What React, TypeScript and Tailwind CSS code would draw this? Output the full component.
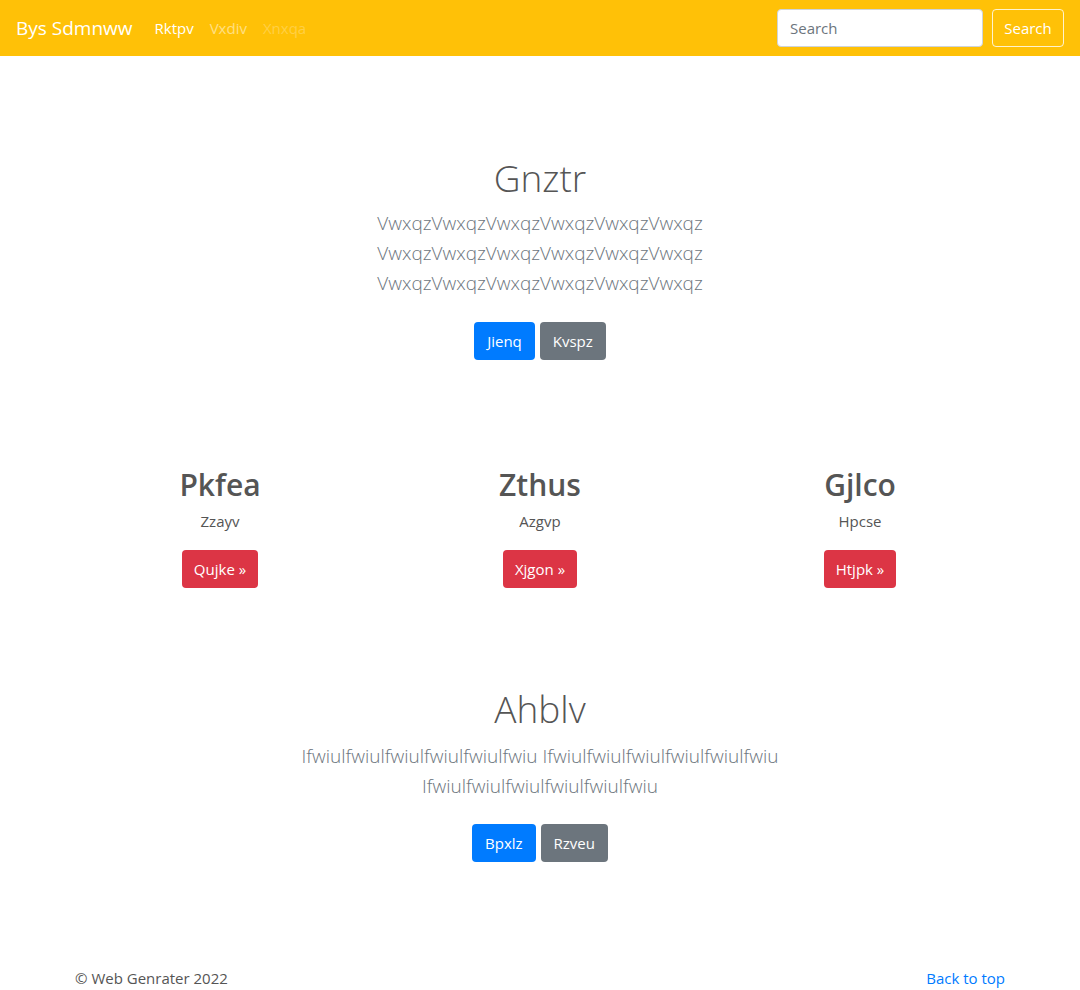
export default function App() {
  return (
    <div className="min-h-[990px] bg-white text-[#555] font-['Open_Sans',sans-serif]">
      {/* navbar */}
      <nav className="h-14 bg-[#ffc107] flex items-center justify-between px-4">
        <div className="flex items-center">
          <a href="#" className="text-white text-[19px] mr-[22px]">Bys Sdmnww</a>
          <ul className="flex items-center gap-4 text-[15px]">
            <li><a href="#" className="text-white">Rktpv</a></li>
            <li><a href="#" className="text-white/50">Vxdiv</a></li>
            <li><a href="#" className="text-white/25">Xnxqa</a></li>
          </ul>
        </div>
        <form className="flex items-center gap-[9px]">
          <input
            placeholder="Search"
            className="w-[206px] h-[38px] rounded-[4px] border border-[#ced4da] bg-white px-3 text-[15px] text-[#495057] placeholder:text-[#6c757d] outline-none"
          />
          <button type="button" className="h-[38px] w-[72px] rounded-[4px] border border-white/80 text-white text-[15px]">
            Search
          </button>
        </form>
      </nav>

      {/* hero */}
      <section className="pt-[98px] text-center">
        <h1 className="text-[37px] font-light leading-[48px] mb-[6px]">Gnztr</h1>
        <p className="text-[19px] font-light leading-[30px] text-[#6c757d]">
          <span className="block">VwxqzVwxqzVwxqzVwxqzVwxqzVwxqz</span>
          <span className="block">VwxqzVwxqzVwxqzVwxqzVwxqzVwxqz</span>
          <span className="block">VwxqzVwxqzVwxqzVwxqzVwxqzVwxqz</span>
        </p>
        <div className="mt-[24px] flex justify-center gap-[5px]">
          <a href="#" className="h-[38px] px-[13px] rounded-[4px] bg-[#007bff] text-white text-[15px] flex items-center">Jienq</a>
          <a href="#" className="h-[38px] px-[13px] rounded-[4px] bg-[#6c757d] text-white text-[15px] flex items-center">Kvspz</a>
        </div>
      </section>

      {/* three columns */}
      <section className="mt-[106px] max-w-[960px] mx-auto grid grid-cols-3">
        {[
          ["Pkfea", "Zzayv", "Qujke"],
          ["Zthus", "Azgvp", "Xjgon"],
          ["Gjlco", "Hpcse", "Htjpk"],
        ].map(([h, t, b]) => (
          <div key={h} className="flex flex-col items-center">
            <h2 className="text-[30px] font-semibold leading-[38px]">{h}</h2>
            <p className="mt-[5px] text-[15px] leading-[24px]">{t}</p>
            <a href="#" className="mt-[17px] h-[38px] px-3 rounded-[4px] bg-[#dc3545] text-white text-[15px] flex items-center">
              {b} &raquo;
            </a>
          </div>
        ))}
      </section>

      {/* second hero */}
      <section className="mt-[97px] text-center">
        <h1 className="text-[37px] font-light leading-[48px] mb-[8px]">Ahblv</h1>
        <p className="text-[19px] font-light leading-[30px] text-[#6c757d]">
          <span className="block">Ifwiulfwiulfwiulfwiulfwiulfwiu Ifwiulfwiulfwiulfwiulfwiulfwiu</span>
          <span className="block">Ifwiulfwiulfwiulfwiulfwiulfwiu</span>
        </p>
        <div className="mt-[23px] flex justify-center gap-[5px]">
          <a href="#" className="h-[38px] px-[13px] rounded-[4px] bg-[#007bff] text-white text-[15px] flex items-center">Bpxlz</a>
          <a href="#" className="h-[38px] px-[13px] rounded-[4px] bg-[#6c757d] text-white text-[15px] flex items-center">Rzveu</a>
        </div>
      </section>

      {/* footer */}
      <footer className="mt-[104px] max-w-[930px] mx-auto flex justify-between text-[15px] leading-[24px]">
        <p>© Web Genrater 2022</p>
        <a href="#" className="text-[#007bff]">Back to top</a>
      </footer>
    </div>
  );
}
